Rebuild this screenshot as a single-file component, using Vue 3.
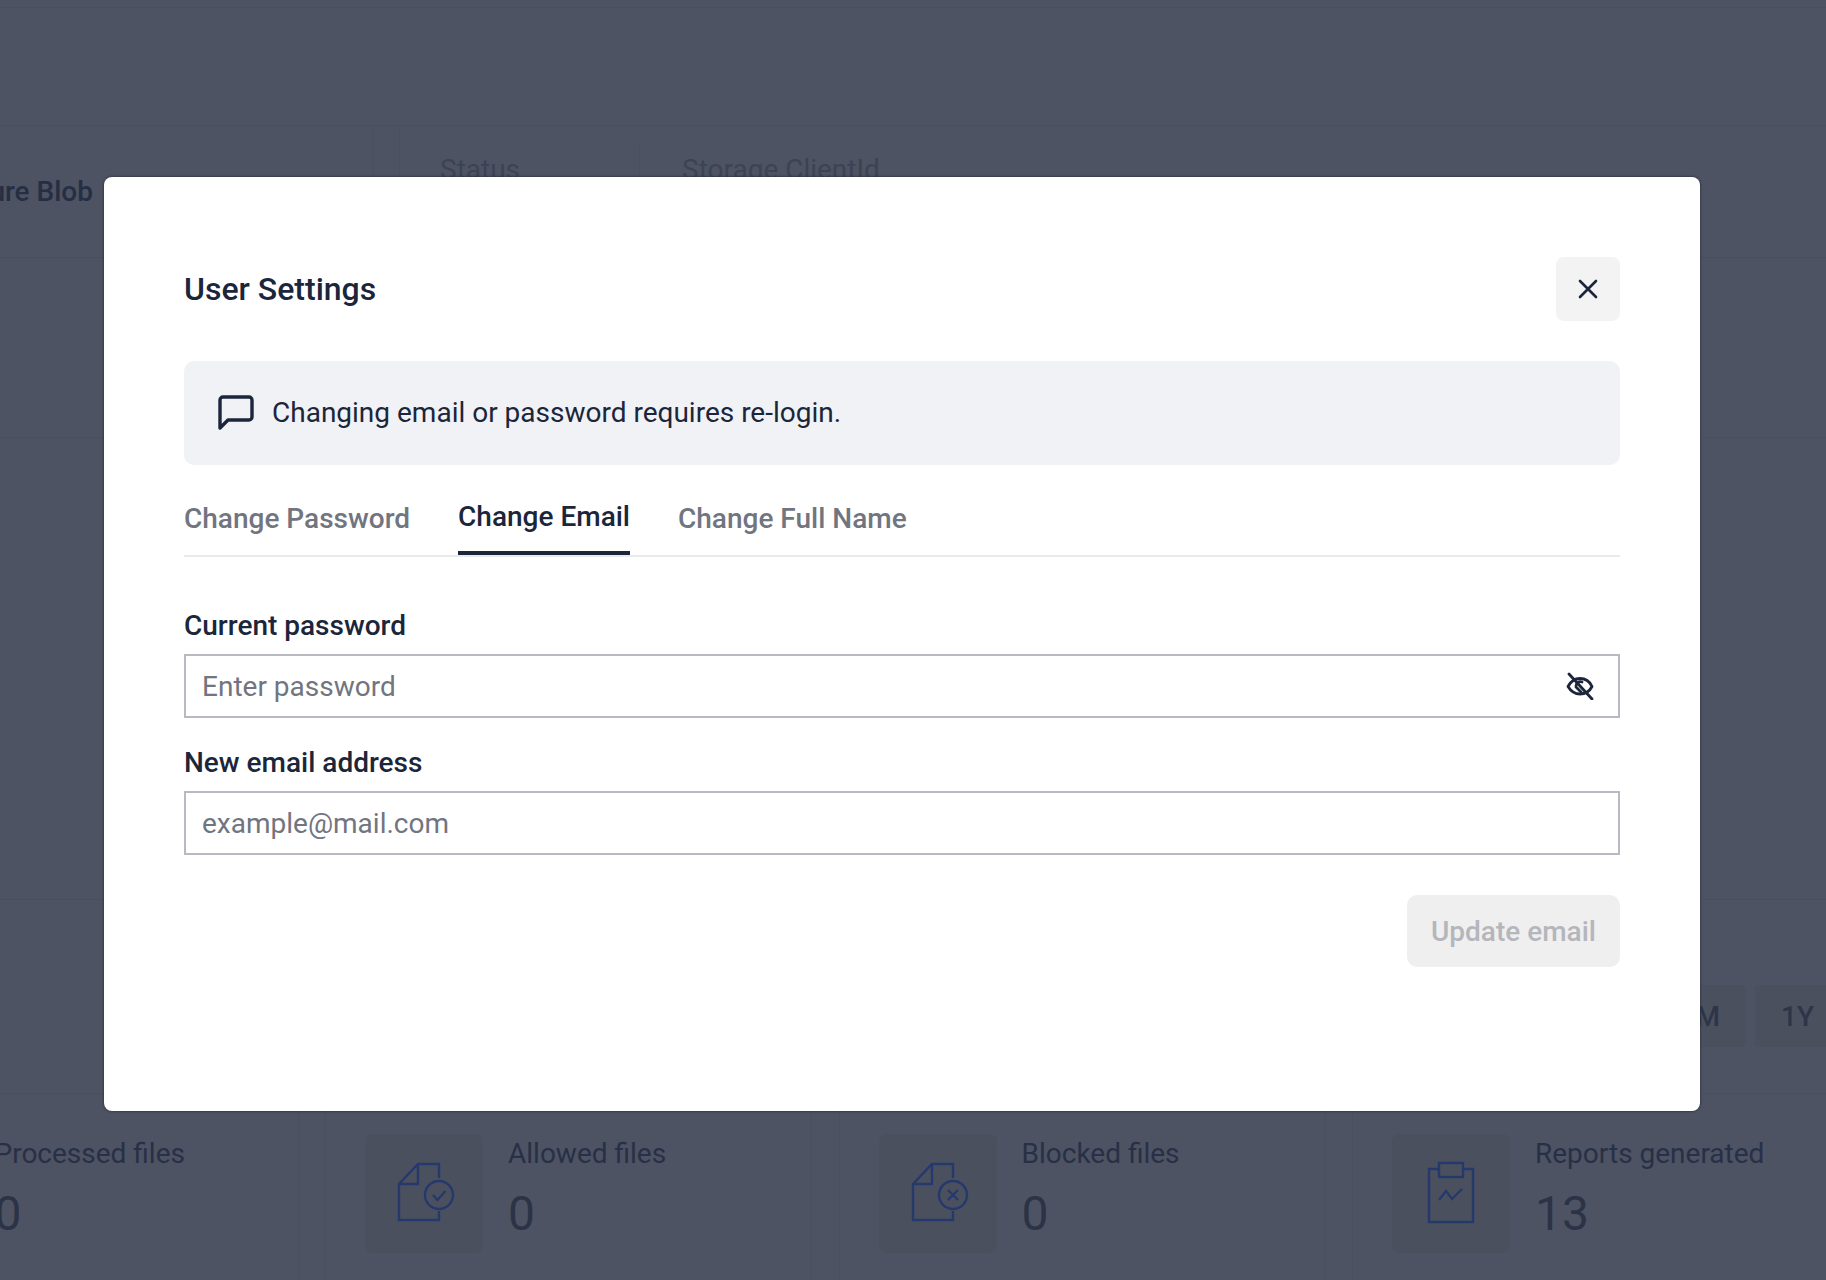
<script setup>
const tabs = [
  { label: 'Change Password', active: false },
  { label: 'Change Email', active: true },
  { label: 'Change Full Name', active: false },
]
const stats = [
  { label: 'Processed files', value: '0', icon: 'none' },
  { label: 'Allowed files', value: '0', icon: 'check' },
  { label: 'Blocked files', value: '0', icon: 'cross' },
  { label: 'Reports generated', value: '13', icon: 'report' },
]
</script>

<template>
  <div class="page">
    <div class="strip"></div>
    <div class="bar"></div>
    <section class="info-row">
      <div class="source-card"><span class="source">Azure Blob</span></div>
      <div class="detail-card">
        <div class="detail detail-first">Status</div>
        <div class="detail detail-second">Storage ClientId</div>
      </div>
    </section>
    <div class="band"></div>
    <div class="chart"></div>
    <div class="ranges">
      <span class="range">1M</span>
      <span class="range">1Y</span>
    </div>
    <section class="stats">
      <article v-for="stat in stats" :key="stat.label" class="stat">
        <div class="stat-icon">
          <svg v-if="stat.icon === 'check' || stat.icon === 'cross'" class="doc" width="58" height="60" viewBox="0 0 58 60" fill="none" stroke="#26396d" stroke-width="2.4">
            <path d="M42 16V2H21L2 22V58H42V49" />
            <path d="M21 2V22H2" />
            <circle cx="42" cy="33" r="14" />
            <path v-if="stat.icon === 'check'" d="M36 33l4.500 5 8-9" />
            <path v-else d="M37 28l10 10M47 28l-10 10" />
          </svg>
          <svg v-else-if="stat.icon === 'report'" width="48" height="63" viewBox="0 0 48 63" fill="none" stroke="#26396d" stroke-width="2.400">
            <path d="M12 8H2V61H46V8H36" />
            <rect x="12" y="2" width="24" height="14" />
            <path d="M12 39l7-9 6 8 10-10" />
          </svg>
        </div>
        <div class="stat-text">
          <div class="stat-label">{{ stat.label }}</div>
          <div class="stat-value">{{ stat.value }}</div>
        </div>
      </article>
    </section>

    <div class="overlay">
      <div class="modal">
        <header class="modal-head">
          <h2 class="modal-title">User Settings</h2>
          <button class="close" type="button" aria-label="Close">
            <svg width="20" height="20" viewBox="0 0 20 20" fill="none" stroke="#1b263b" stroke-width="2.600" stroke-linecap="round">
              <path d="M2 2l16 16M18 2L2 18" />
            </svg>
          </button>
        </header>

        <div class="notice">
          <svg width="36" height="36" viewBox="0 0 36 36" fill="none" stroke="#1b263b" stroke-width="3.400" stroke-linejoin="round">
            <path d="M2 33V5a3 3 0 0 1 3-3h26a3 3 0 0 1 3 3v17a3 3 0 0 1-3 3H10z" />
          </svg>
          <span>Changing email or password requires re-login.</span>
        </div>

        <nav class="tabs">
          <a v-for="tab in tabs" :key="tab.label" class="tab" :class="{ active: tab.active }">{{ tab.label }}</a>
        </nav>

        <form class="form" @submit.prevent>
          <label class="field">
            <span class="field-label">Current password</span>
            <span class="input-wrap">
              <input class="input" type="password" placeholder="Enter password" />
              <svg class="eye" width="28" height="28" viewBox="0 0 28 28" fill="none" stroke="#1b263b" stroke-width="2.800" stroke-linecap="round" stroke-linejoin="round">
                <path d="M2 14.500C5 9 9 6.500 14 6.500s9.500 2.500 12 8c-2.500 5-7 7.500-12 7.500S5 19.500 2 14.500z" />
                <path d="M10 14a4.500 4.500 0 0 1 6-4M10 15l5 5" />
                <path d="M3 2l23 25" />
              </svg>
            </span>
          </label>
          <label class="field">
            <span class="field-label">New email address</span>
            <input class="input" type="email" placeholder="example@mail.com" />
          </label>
          <div class="actions">
            <button class="submit" type="submit" disabled>Update email</button>
          </div>
        </form>
      </div>
    </div>
  </div>
</template>

<style>
html, body { margin: 0; background: #4d5362; }
</style>

<style scoped>
* { box-sizing: border-box; }
.page {
  position: relative;
  width: 1826px;
  height: 1280px;
  overflow: hidden;
  background: #4d5362;
  font-family: Roboto, "Liberation Sans", sans-serif;
  font-size: 28px;
  color: #2a3144;
}
.strip { height: 8px; border-bottom: 1px solid #494f5d; }
.bar { height: 117px; }
.info-row {
  display: flex;
  gap: 25px;
  height: 133px;
  border-top: 1px solid #494f5d;
  border-bottom: 1px solid #494f5d;
}
.source-card {
  width: 374px;
  border-right: 1px solid #494f5d;
  display: flex;
  align-items: center;
  justify-content: flex-end;
  padding-right: 280px;
  white-space: nowrap;
}
.source { font-weight: 500; color: #262e44; }
.detail-card {
  flex: 1;
  display: flex;
  border-left: 1px solid #494f5d;
  padding-top: 16px;
  color: #3c4353;
}
.detail { padding: 10px 0 0 42px; line-height: 36px; }
.detail-first { width: 239px; padding-left: 40px; }
.detail-second { border-left: 1px solid #494f5d; }
.band { height: 180px; border-bottom: 1px solid #494f5d; }
.chart { height: 462px; border-bottom: 1px solid #494f5d; }
.ranges {
  display: flex;
  justify-content: flex-end;
  gap: 9px;
  height: 193px;
  margin-right: -14px;
  padding-top: 85px;
}
.range {
  height: 62px;
  padding: 0 26px;
  display: flex;
  align-items: center;
  background: #4a505e;
  border-radius: 4px;
  font-weight: 500;
  color: #2e3548;
}
.stats {
  display: grid;
  grid-template-columns: repeat(4, 487px);
  column-gap: 26.5px;
  margin-left: -188.5px;
  border-top: 1px solid #494f5d;
  height: 188px;
}
.stat {
  display: flex;
  gap: 25px;
  padding: 40px 0 0 39px;
  border-left: 1px solid #494f5d;
  border-right: 1px solid #494f5d;
}
.stat-icon {
  width: 118px;
  height: 119px;
  border-radius: 8px;
  background: #4a505e;
  display: flex;
  align-items: center;
  justify-content: center;
}
.stat-icon svg { margin-bottom: 3px; }
.doc { margin-left: 4px; }
.stat-text { display: flex; flex-direction: column; }
.stat-label { line-height: 36px; margin-top: 2px; white-space: nowrap; color: #283047; }
.stat-value { font-size: 48px; line-height: 56px; margin-top: 14px; color: #2c3346; }

.overlay {
  position: absolute;
  inset: 0;
  padding: 177px 0 0 104px;
}
.modal {
  width: 1596px;
  height: 934px;
  padding: 80px;
  background: #fff;
  border-radius: 8px;
  box-shadow: 0 0 2px 1px rgba(40, 44, 56, 0.55);
  color: #1b263b;
}
.modal-head {
  display: flex;
  align-items: center;
  justify-content: space-between;
  height: 64px;
}
.modal-title { margin: 0; font-size: 32px; line-height: 40px; font-weight: 500; }
.close {
  width: 64px;
  height: 64px;
  padding: 0;
  border: 0;
  border-radius: 8px;
  background: #f3f3f4;
  display: flex;
  align-items: center;
  justify-content: center;
}
.notice {
  display: flex;
  align-items: center;
  gap: 18px;
  height: 104px;
  margin-top: 40px;
  padding-left: 34px;
  border-radius: 10px;
  background: #f1f2f6;
  line-height: 36px;
}
.tabs {
  display: flex;
  gap: 48px;
  height: 92px;
  padding-top: 32px;
  border-bottom: 2px solid #e9eaed;
  font-weight: 500;
}
.tab { height: 58px; line-height: 40px; color: #71757f; white-space: nowrap; margin-top: 1.5px; }
.tab.active {
  margin-top: 0;
  height: 58px;
  color: #1b263b;
  border-bottom: 4px solid #1b263b;
}
.form { margin-top: 51px; }
.field { display: block; margin-bottom: 27px; }
.field-label {
  display: block;
  line-height: 36px;
  margin-bottom: 10px;
  font-weight: 500;
}
.input-wrap { position: relative; display: block; }
.input {
  display: block;
  width: 100%;
  height: 64px;
  padding: 0 16px;
  border: 2px solid #b9bac1;
  border-radius: 0;
  outline: none;
  background: #fff;
  font: 400 28px Roboto, "Liberation Sans", sans-serif;
  color: #1b263b;
}
.input::placeholder { color: #71757f; opacity: 1; }
.eye { position: absolute; top: 18px; right: 26px; }
.actions { display: flex; justify-content: flex-end; margin-top: 40px; }
.submit {
  width: 213px;
  height: 72px;
  border: 0;
  border-radius: 10px;
  background: #efeff0;
  font: 500 28px Roboto, "Liberation Sans", sans-serif;
  color: #b5b6bc;
}
</style>
